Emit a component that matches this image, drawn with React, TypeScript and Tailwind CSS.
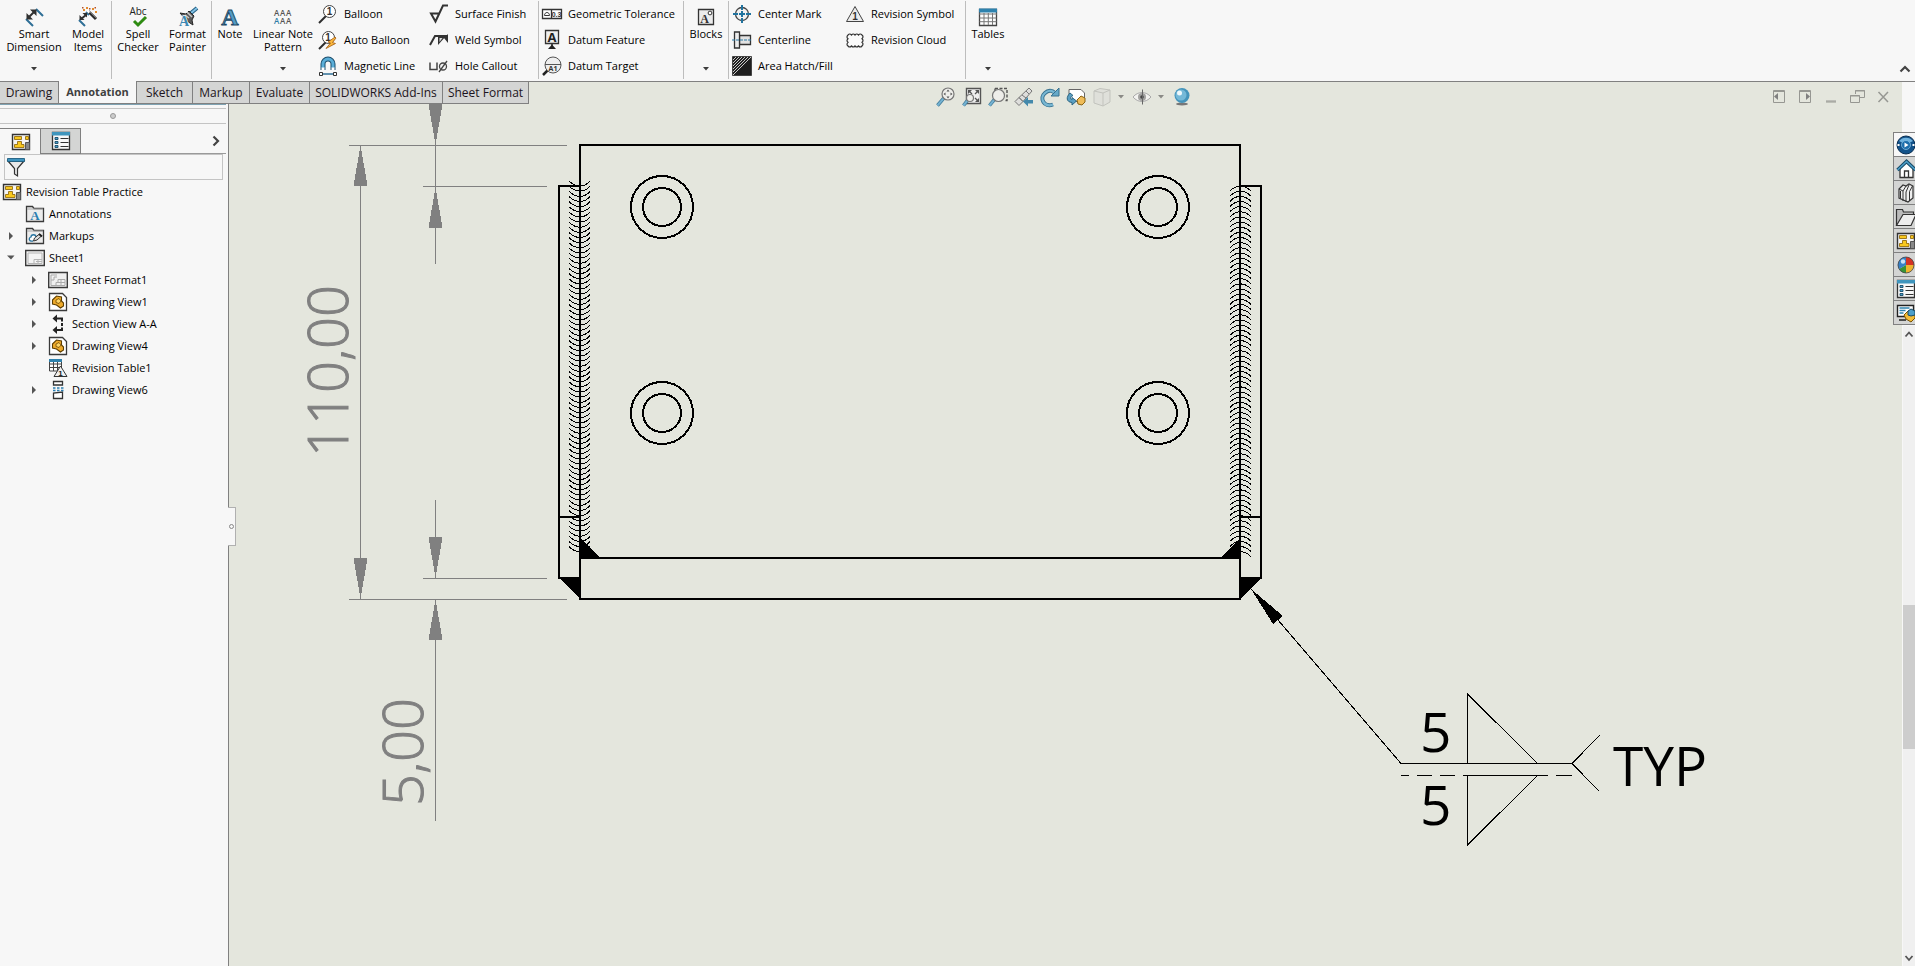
import React from "react";

type IconProps = { children: React.ReactNode; className?: string };

function Icon({ children, className = "h-5 w-5" }: IconProps) {
  return (
    <svg viewBox="0 0 20 20" fill="none" aria-hidden="true" className={`${className} shrink-0 overflow-visible`}>
      {children}
    </svg>
  );
}

function Caret({ className = "text-[#3c3c3c]" }: { className?: string }) {
  return (
    <svg viewBox="0 0 6 4" aria-hidden="true" className={`h-1 w-1.5 ${className}`}>
      <path d="M0 0h6L3 3.500z" fill="currentColor" />
    </svg>
  );
}

/* ---------- ribbon icons ---------- */

const SmartDimensionIcon = () => (
  <Icon>
    <path d="M2 12l7 7M12 2l7 7" stroke="#2f6f96" strokeWidth="2" />
    <path d="M4 11L11 4" stroke="#303030" strokeWidth="2" />
    <path d="M2.500 12.500V6l6.500 6.500zM12.500 2.500H6l6.500 6.500z" fill="#303030" />
  </Icon>
);

const ModelItemsIcon = () => (
  <Icon>
    <path d="M1 13l6 6M8 5l3 3" stroke="#2f6f96" strokeWidth="2" />
    <path d="M3 12L8 8" stroke="#303030" strokeWidth="2" />
    <path d="M1.500 13V8l5 5zM9 6H4.500L9 10.500z" fill="#303030" />
    <path d="M10 4l8 8" stroke="#2b2b2b" strokeWidth="3" />
    <path d="M9.500 3.500l2 2" stroke="#fff" strokeWidth="2.500" />
    <path d="M11.500 4.500l6.500 6.500" stroke="#8d8d8d" strokeWidth=".8" />
    <path d="M8 0h2v2H8zM14 1h2v2h-2zM17 4h2v2h-2zM5 2h2v2H5z" fill="#e48b2c" />
    <path d="M11 1h1.500v1.500H11zM4 0h1.500v1.500H4zM16.500 0H18v1.500h-1.500z" fill="#b4512a" />
  </Icon>
);

const SpellCheckerIcon = () => (
  <Icon>
    <text x="10" y="8" fontSize="10" textAnchor="middle" fontFamily="Open Sans, sans-serif" fill="#222">
      Abc
    </text>
    <path d="M6 14l4 4 8-8" stroke="#2e8b12" strokeWidth="3" />
  </Icon>
);

const FormatPainterIcon = () => (
  <Icon>
    <path d="M13 6l6-5" stroke="#235d80" strokeWidth="4" />
    <path d="M13 6l6-5" stroke="#7fc0e4" strokeWidth="2" />
    <path d="M2 6l6 1 3-3 5 5-2 4 1 5-6-4z" fill="#5a5a5a" stroke="#262626" />
    <path d="M9 5l5 5M7 8l4 3" stroke="#c9c9c9" strokeWidth="1.500" />
    <text x="1" y="19" fontSize="14" fontWeight="700" fontFamily="Liberation Serif, serif" fill="#3c88b4" stroke="#f7f7f7" strokeWidth="1.500" paintOrder="stroke">
      A
    </text>
  </Icon>
);

const NoteIcon = () => (
  <Icon>
    <text x="10" y="18" fontSize="24" fontWeight="700" textAnchor="middle" fontFamily="Liberation Serif, serif" fill="#529cc6" stroke="#1d4864" strokeWidth=".9">
      A
    </text>
  </Icon>
);

const LinearNoteIcon = () => (
  <Icon>
    <g fontSize="8" fontFamily="Open Sans, sans-serif" fontWeight="600" fill="#555">
      <text x="1" y="9">A</text>
      <text x="7" y="9">A</text>
      <text x="13" y="9">A</text>
      <text x="1" y="17" fill="#2d7da8">A</text>
      <text x="7" y="17">A</text>
      <text x="13" y="17">A</text>
    </g>
  </Icon>
);

const BalloonIcon = () => (
  <Icon>
    <path d="M1 19l7-7" stroke="#2d2d2d" strokeWidth="2" />
    <circle cx="11.500" cy="7.500" r="6" fill="#fff" stroke="#444" />
    <text x="11.500" y="11" fontSize="10" fontWeight="700" textAnchor="middle" fontFamily="Liberation Sans, sans-serif" fill="#333">
      1
    </text>
  </Icon>
);

const AutoBalloonIcon = () => (
  <Icon>
    <path d="M1 19l7-7" stroke="#2d2d2d" strokeWidth="2" />
    <circle cx="10.500" cy="7.500" r="6" fill="#fff" stroke="#444" />
    <text x="10" y="11" fontSize="10" fontWeight="700" textAnchor="middle" fontFamily="Liberation Sans, sans-serif" fill="#333">
      1
    </text>
    <path d="M17 7l-7 5 2.500 1L8 18.500l9.500-5-3-1L18 8z" fill="#fbb83c" stroke="#a25a11" strokeWidth=".8" />
  </Icon>
);

const MagneticLineIcon = () => (
  <Icon>
    <path d="M5 14V8a5 5 0 0 1 10 0v6" stroke="#1d4e6c" strokeWidth="5" />
    <path d="M5 12V8a5 5 0 0 1 10 0v4" stroke="#5aaed8" strokeWidth="3" />
    <path d="M3.500 11.500h3v2.500h-3zM13.500 11.500h3v2.500h-3z" fill="#fff" />
    <path d="M4 18h12" stroke="#2f6f96" strokeWidth="1.500" />
    <path d="M1.500 16.500h3v3h-3zM15.500 16.500h3v3h-3z" fill="#fff" stroke="#333" />
  </Icon>
);

const SurfaceFinishIcon = () => (
  <Icon>
    <path d="M19 1.500h-5L6.500 17.500 2 9.500h8" stroke="#333" strokeWidth="2" />
  </Icon>
);

const WeldSymbolIcon = () => (
  <Icon>
    <path d="M1 15L6 6h13" stroke="#333" strokeWidth="2" />
    <path d="M9 6v9l8-9M15 8l4 5V4z" fill="#333" />
    <path d="M10.500 8v4l3-4z" fill="#ddd" />
  </Icon>
);

const HoleCalloutIcon = () => (
  <Icon>
    <path d="M1 6.500v7h7v-7" stroke="#444" strokeWidth="1.500" />
    <circle cx="14" cy="10.500" r="3.500" stroke="#444" strokeWidth="1.300" />
    <path d="M10 16l8-11" stroke="#444" strokeWidth="1.300" />
  </Icon>
);

const GeometricToleranceIcon = () => (
  <Icon>
    <path d="M.5 5.500h19v9H.5zM9.500 5.500v9" fill="#fff" stroke="#333" strokeWidth="1.300" />
    <path d="M2.500 11.500h5c0-4-5-4-5 0z" stroke="#333" />
    <text x="14.500" y="12.500" fontSize="7" fontWeight="700" textAnchor="middle" fontFamily="Liberation Sans, sans-serif" fill="#333">
      0.3
    </text>
  </Icon>
);

const DatumFeatureIcon = () => (
  <Icon>
    <path d="M3.500.5h13v13h-13z" fill="#efefef" stroke="#333" strokeWidth="1.300" />
    <text x="10" y="11.500" fontSize="13" fontWeight="700" textAnchor="middle" fontFamily="Open Sans, sans-serif" fill="#222">
      A
    </text>
    <path d="M10 14v2" stroke="#222" strokeWidth="1.500" />
    <path d="M10 14.500l4 4.500H6z" fill="#222" />
  </Icon>
);

const DatumTargetIcon = () => (
  <Icon>
    <path d="M1 19l5-5" stroke="#222" strokeWidth="2.500" />
    <circle cx="11" cy="9" r="8" fill="#eee" stroke="#555" />
    <path d="M3 8.500h16" stroke="#555" />
    <text x="11" y="15" fontSize="7" fontWeight="700" textAnchor="middle" fontFamily="Open Sans, sans-serif" fill="#333">
      A1
    </text>
  </Icon>
);

const BlocksIcon = () => (
  <Icon>
    <path d="M2.500 2.500h15v15h-15z" fill="#ececec" stroke="#333" strokeWidth="1.300" />
    <text x="8.500" y="15.500" fontSize="12" fontWeight="700" textAnchor="middle" fontFamily="Liberation Serif, serif" fill="#333">
      A
    </text>
    <circle cx="14" cy="6" r="1.900" fill="#fff" stroke="#333" />
  </Icon>
);

const CenterMarkIcon = () => (
  <Icon>
    <circle cx="10" cy="10" r="6.500" fill="#f2f2f2" stroke="#444" strokeWidth="1.300" />
    <path d="M10 1v5M10 14v5M1 10h5M14 10h5M10 7v6M7 10h6" stroke="#20739f" strokeWidth="2" />
  </Icon>
);

const CenterlineIcon = () => (
  <Icon>
    <path d="M7.500 5.500h11v9h-11z" fill="#e2e2e2" stroke="#333" strokeWidth="1.300" />
    <path d="M2.500 2h5v16h-5z" fill="#ededed" stroke="#333" strokeWidth="1.300" />
    <path d="M0 10h20" stroke="#2b7ba5" strokeWidth="1.200" strokeDasharray="3 1" />
  </Icon>
);

const AreaHatchIcon = () => (
  <Icon>
    <path d="M.5.500h19v19H.5z" fill="#1f1f1f" stroke="#444" />
    <path d="M1 4l3-3M1 7l6-6M1 10l9-9M1 13l12-12M1 16L16 1M1 19L19 1" stroke="#ddd" strokeWidth=".9" />
  </Icon>
);

const RevisionSymbolIcon = () => (
  <Icon>
    <path d="M10 2.500l8.500 15h-17z" fill="#ececec" stroke="#444" />
    <text x="10" y="16" fontSize="10" fontWeight="700" textAnchor="middle" fontFamily="Liberation Sans, sans-serif" fill="#333">
      1
    </text>
  </Icon>
);

const RevisionCloudIcon = () => (
  <Icon>
    <path
      d="M3 5q1.700-2 3.500 0q1.700-2 3.500 0q1.700-2 3.500 0q1.700-2 3.500 0q2 1.700 0 3.700q2 1.700 0 3.600q2 1.700 0 3.700q-1.700 2-3.500 0q-1.700 2-3.500 0q-1.700 2-3.500 0q-1.700 2-3.500 0q-2-1.700 0-3.700q-2-1.700 0-3.600q-2-1.700 0-3.700z"
      fill="#fafafa"
      stroke="#333"
      strokeWidth="1.200"
    />
  </Icon>
);

const TablesIcon = () => (
  <Icon>
    <path d="M1.500 2.500h17v16h-17z" fill="#fff" stroke="#444" strokeWidth="1.300" />
    <path d="M1 7h18M1.500 11h17M1.500 14.700h17M6 6v12M10.300 6v12M14.500 6v12" stroke="#777" />
    <path d="M1 1.500h18v4H1z" fill="#2e82ae" />
  </Icon>
);

/* ---------- feature tree icons ---------- */

const DrawingIcon = () => (
  <Icon>
    <path d="M1.500 2.500h17v15h-17z" fill="#f4f4f4" stroke="#333" strokeWidth="1.400" />
    <path d="M3.500 4.500h7v3h-7zM14.500 4.500h3v3h-3zM6.500 9.500h4v3h2.500v3H3.500v-3h3z" fill="#f8c81e" stroke="#8a6100" strokeWidth=".8" />
    <path d="M14.500 17.500v-7h4v7z" fill="#888" stroke="#555" />
  </Icon>
);

const FolderShape = () => (
  <path d="M1.500 17.500v-15h6l1.500 2h9.500v13z" fill="#ececec" stroke="#3a3a3a" strokeWidth="1.300" />
);

const AnnotationsIcon = () => (
  <Icon>
    <FolderShape />
    <path d="M2 5h16" stroke="#aaa" />
    <text x="10" y="16" fontSize="13" fontWeight="700" textAnchor="middle" fontFamily="Liberation Serif, serif" fill="#2a7db0">
      A
    </text>
  </Icon>
);

const MarkupsIcon = () => (
  <Icon>
    <FolderShape />
    <path d="M2 5h16" stroke="#aaa" />
    <path d="M8 15c-4 1-5-3-2-4 0-3 5-3 5 0" fill="#fff" stroke="#2874a0" strokeWidth="1.300" />
    <path d="M8.500 15l1-3 5-4 2 2-4.500 4z" fill="#ddd" stroke="#333" />
    <path d="M14 8l3 2.500" stroke="#222" strokeWidth="2" />
  </Icon>
);

const SheetIcon = () => (
  <Icon>
    <path d="M.7 2.500h18.600v15H.7z" fill="#f4f4f4" stroke="#3a3a3a" strokeWidth="1.400" />
    <path d="M3 5h14v10.500H3zM9 15.500v-4h8M13 11.500v4M11 13.500h6" stroke="#b4b4b4" />
  </Icon>
);

const SheetFormatIcon = () => (
  <Icon>
    <path d="M.7 2.500h18.600v15H.7z" fill="#f0f0f0" stroke="#3a3a3a" strokeWidth="1.400" />
    <path d="M3 5h6M3 5v5h3v-3h3M8 15.500v-3h2v-3h7v6zM13 10v5.500M10 12.500h7M3 10v5.500h5" stroke="#aaa" />
  </Icon>
);

const DrawingViewIcon = () => (
  <Icon>
    <path d="M1.500 1.500h13l4 4v13h-17z" fill="#fff" stroke="#3a3a3a" strokeWidth="1.300" />
    <path d="M4.500 8l4-4 5 1v4l2 2v3l-3 2-4-3-4-1z" fill="#efab2b" stroke="#5f3f00" strokeWidth="1.100" />
    <path d="M8 8l3-1.500 2 2.500-2 2.500-3-1z" fill="#ffd566" stroke="#714a00" strokeWidth=".8" />
  </Icon>
);

const SectionViewIcon = () => (
  <Icon>
    <path d="M8 4.500h6v3M14 9v3M14 13.500v2.500H8" stroke="#222" strokeWidth="2" />
    <path d="M9 .5v8L4.500 4.500zM9 12v8l-4.500-4z" fill="#222" />
  </Icon>
);

const RevisionTableIcon = () => (
  <Icon>
    <path d="M1.500 2h12v11h-12zM1.500 6h12M1.500 9.500h12M5.500 4v9M9.500 4v9" fill="#fff" stroke="#444" />
    <path d="M1 1h13v3H1z" fill="#2e82ae" />
    <path d="M12.500 8l6.500 10.500H6z" fill="#f1f1f1" stroke="#333" />
    <text x="12.500" y="17.500" fontSize="8" fontWeight="700" textAnchor="middle" fontFamily="Liberation Sans, sans-serif" fill="#222">
      1
    </text>
  </Icon>
);

const BrokenViewIcon = () => (
  <Icon>
    <path d="M5.500 5V1.500h9V5zM5.500 18.500V13l9-1v6.500z" fill="#fff" stroke="#333" strokeWidth="1.300" />
    <path d="M5 8h2.500M9 8h2.500M13 8h2.500M5 10.500h2.500M9 10.500h2.500M13 10.500h2.500" stroke="#2a7db0" strokeWidth="1.500" />
  </Icon>
);

const PropertiesIcon = () => (
  <Icon>
    <path d="M1.500 1.500h17v17h-17z" fill="#f8f8f8" stroke="#333" strokeWidth="1.300" />
    <path d="M1 1h18v3.500H1z" fill="#3f95bd" />
    <path d="M4 6.500h3v2H4zM4 10.500h3v2H4zM4 14.500h3v2H4z" fill="#4da2cc" stroke="#174a66" strokeWidth=".9" />
    <path d="M9.500 7.500h8M9.500 11.500h8M9.500 15.500h8" stroke="#333" strokeWidth="1.200" />
  </Icon>
);

const FunnelIcon = () => (
  <Icon>
    <path d="M2 4l6.500 7.500V17l3 2v-7.500L18 4z" fill="#e9e9e9" stroke="#333" strokeWidth="1.200" />
    <path d="M1.500 1.500h17v3h-17z" fill="#3d93be" stroke="#1e5d7f" strokeWidth=".9" />
  </Icon>
);

/* ---------- view toolbar icons ---------- */

const Lens = ({ x, y, r }: { x: number; y: number; r: number }) => (
  <>
    <path d={`M1.500 18.500L${x - r * 0.7} ${y + r * 0.7}`} stroke="#3f7896" strokeWidth="3.500" />
    <path d={`M1.500 18.500L${x - r * 0.7} ${y + r * 0.7}`} stroke="#74b2d2" strokeWidth="2" />
    <circle cx={x} cy={y} r={r} fill="#eeeeea" stroke="#777" strokeWidth="1.200" />
  </>
);

const viewTools = [
  {
    label: "Zoom to Fit",
    icon: (
      <Icon>
        <Lens x={12} y={7} r={6} />
        <path d="M12 2.500L10.500 4.500h3zM12 11.500l-1.500-2h3zM7.500 7l2-1.500v3zM16.500 7l-2-1.500v3z" fill="#555" />
      </Icon>
    ),
  },
  {
    label: "Zoom to Area",
    icon: (
      <Icon>
        <path d="M4.500 1.500h14v15h-14z" fill="#eee" stroke="#555" strokeWidth="1.400" />
        <path d="M6 3h4L6 7zM17 3h-4l4 4zM17 15v-4l-4 4z" fill="#555" />
        <path d="M7 4l3 3M16 4l-3 3M16 14l-3-3" stroke="#555" strokeWidth="1.300" />
        <Lens x={8} y={11} r={3.5} />
      </Icon>
    ),
  },
  {
    label: "Zoom Selection",
    icon: (
      <Icon>
        <path d="M7 1.500h12v12h-3M7 1.500v3" stroke="#555" strokeWidth="1.400" strokeDasharray="3 1.500" />
        <Lens x={10.5} y={8.5} r={6} />
      </Icon>
    ),
  },
  {
    label: "Previous View",
    icon: (
      <Icon>
        <path d="M1 14.500l4 4 4-4-4-4zM5 10.500l4 4 9-10.500-3-3z" fill="#dededc" stroke="#777" />
        <path d="M8 8l4 3M12 4l3 3" stroke="#777" />
        <path d="M9 14.500l5-4.500v3h5v3.500h-5v3z" fill="#4489ab" />
      </Icon>
    ),
  },
  {
    label: "Rotate View",
    icon: (
      <Icon>
        <path d="M13 17.500C4 21-1 11 5 6c4-4 9-2 10.500 1" stroke="#36708e" strokeWidth="4" />
        <path d="M13 17.500C4 21-1 11 5 6c4-4 9-2 10.500 1" stroke="#78b7d3" strokeWidth="2.200" />
        <path d="M19 1v8h-8l3-3z" fill="#66a9c8" stroke="#36708e" />
      </Icon>
    ),
  },
  {
    label: "3D Drawing View",
    icon: (
      <Icon>
        <path d="M3 14V2.500h12l3.500 3.500v9z" fill="#fff" stroke="#666" />
        <path d="M4 6c-4 4-4 9 2 9.500V18l4.500-4L6 10.500v2c-2 0-2-3 1-4z" fill="#5a9fc2" stroke="#2d6683" />
        <path d="M11 13l4-4 4 2v4l-3 3-4-1z" fill="#efbc58" stroke="#8a6414" />
      </Icon>
    ),
  },
  {
    label: "Display Style",
    caret: true,
    icon: (
      <Icon>
        <path d="M2 4l6-2.500L18 3v12l-7 4-9-3z" fill="#dfe0da" stroke="#c2c3bd" />
        <path d="M2 4l9 2 7-3M11 6v13" stroke="#c2c3bd" />
      </Icon>
    ),
  },
  {
    label: "Hide/Show Items",
    caret: true,
    icon: (
      <Icon>
        <path d="M1 10c5-6 13-6 18 0-5 6-13 6-18 0z" fill="#f2f2ef" stroke="#aaa" />
        <circle cx="10" cy="10" r="4" fill="#a2a2a0" />
        <circle cx="10" cy="10" r="1.800" fill="#444" />
        <path d="M10.500 2.500v15" stroke="#666" />
      </Icon>
    ),
  },
  {
    label: "View Settings",
    icon: (
      <Icon>
        <ellipse cx="10" cy="17" rx="6" ry="1.500" fill="#777" />
        <circle cx="10" cy="8.500" r="7.500" fill="#4494bb" />
        <circle cx="9" cy="8" r="5.500" fill="#75b9d8" />
        <circle cx="7.500" cy="6" r="2.500" fill="#eef8fc" />
      </Icon>
    ),
  },
];

/* ---------- ribbon ---------- */

type LargeProps = { icon: React.ReactNode; lines: string[]; width: string; menu?: boolean };

function LargeButton({ icon, lines, width, menu }: LargeProps) {
  return (
    <button type="button" className={`${width} flex h-[78px] flex-col items-center pt-1.5`}>
      {icon}
      <span className="block leading-[13px]">
        {lines.map((line) => (
          <span key={line} className="block whitespace-nowrap">
            {line}
          </span>
        ))}
      </span>
      {menu && <Caret className="mt-auto mb-2 text-[#3c3c3c]" />}
    </button>
  );
}

function SmallColumn({ items, width }: { items: [string, React.ReactNode][]; width: string }) {
  return (
    <div className={`${width} flex flex-col`}>
      {items.map(([label, icon]) => (
        <button key={label} type="button" className="flex h-[26px] items-center gap-1.5 whitespace-nowrap">
          {icon}
          {label}
        </button>
      ))}
    </div>
  );
}

function Group({ children }: { children: React.ReactNode }) {
  return <div className="flex shrink-0 border-r border-[#bdbdbd]">{children}</div>;
}

function Ribbon() {
  return (
    <header className="flex h-[82px] border-b border-[#808080] bg-[#f7f7f7] pt-px pb-0.5 text-[11px]">
      <Group>
        <LargeButton width="w-[68px]" icon={<SmartDimensionIcon />} lines={["Smart", "Dimension"]} menu />
        <LargeButton width="mr-[3px] w-10" icon={<ModelItemsIcon />} lines={["Model", "Items"]} />
      </Group>
      <Group>
        <LargeButton width="w-[52px]" icon={<SpellCheckerIcon />} lines={["Spell", "Checker"]} />
        <LargeButton width="w-[47px]" icon={<FormatPainterIcon />} lines={["Format", "Painter"]} />
      </Group>
      <Group>
        <LargeButton width="w-9" icon={<NoteIcon />} lines={["Note"]} />
        <LargeButton width="w-[70px]" icon={<LinearNoteIcon />} lines={["Linear Note", "Pattern"]} menu />
        <SmallColumn
          width="w-[111px]"
          items={[
            ["Balloon", <BalloonIcon />],
            ["Auto Balloon", <AutoBalloonIcon />],
            ["Magnetic Line", <MagneticLineIcon />],
          ]}
        />
        <SmallColumn
          width="w-[109px]"
          items={[
            ["Surface Finish", <SurfaceFinishIcon />],
            ["Weld Symbol", <WeldSymbolIcon />],
            ["Hole Callout", <HoleCalloutIcon />],
          ]}
        />
      </Group>
      <Group>
        <SmallColumn
          width="ml-[3px] w-[141px]"
          items={[
            ["Geometric Tolerance", <GeometricToleranceIcon />],
            ["Datum Feature", <DatumFeatureIcon />],
            ["Datum Target", <DatumTargetIcon />],
          ]}
        />
      </Group>
      <Group>
        <LargeButton width="w-11" icon={<BlocksIcon />} lines={["Blocks"]} menu />
      </Group>
      <Group>
        <SmallColumn
          width="ml-[3px] w-[113px]"
          items={[
            ["Center Mark", <CenterMarkIcon />],
            ["Centerline", <CenterlineIcon />],
            ["Area Hatch/Fill", <AreaHatchIcon />],
          ]}
        />
        <SmallColumn
          width="w-[120px]"
          items={[
            ["Revision Symbol", <RevisionSymbolIcon />],
            ["Revision Cloud", <RevisionCloudIcon />],
          ]}
        />
      </Group>
      <LargeButton width="w-11" icon={<TablesIcon />} lines={["Tables"]} menu />
      <button type="button" aria-label="Collapse ribbon" className="mt-auto mr-1 mb-1.5 ml-auto">
        <svg viewBox="0 0 12 8" className="h-2 w-3" aria-hidden="true">
          <path d="M1.500 6.500L6 2l4.500 4.500" fill="none" stroke="#444" strokeWidth="2.200" />
        </svg>
      </button>
    </header>
  );
}

const tabs = [
  { label: "Drawing", width: "w-[59px]" },
  { label: "Annotation", width: "w-[78px]", active: true },
  { label: "Sketch", width: "w-14" },
  { label: "Markup", width: "w-[57px]" },
  { label: "Evaluate", width: "w-[60px]" },
  { label: "SOLIDWORKS Add-Ins", width: "w-[133px]" },
  { label: "Sheet Format", width: "w-[86px]" },
];

function CommandTabs() {
  return (
    <nav className="absolute -top-px left-0 z-20 flex">
      {tabs.map(({ label, width, active }) => (
        <button
          key={label}
          type="button"
          className={`${width} h-[23px] border-r border-b border-[#808080] text-center whitespace-nowrap ${
            active ? "bg-[#f7f7f7] text-[11px] font-bold text-[#404040]" : "border-t bg-[#d4d5d4] text-[#1c1420]"
          }`}
        >
          {label}
        </button>
      ))}
    </nav>
  );
}

/* ---------- feature manager ---------- */

type Node = { label: string; icon: React.ReactNode; level: number; state?: "open" | "closed" };

const tree: Node[] = [
  { label: "Revision Table Practice", icon: <DrawingIcon />, level: 0 },
  { label: "Annotations", icon: <AnnotationsIcon />, level: 1 },
  { label: "Markups", icon: <MarkupsIcon />, level: 1, state: "closed" },
  { label: "Sheet1", icon: <SheetIcon />, level: 1, state: "open" },
  { label: "Sheet Format1", icon: <SheetFormatIcon />, level: 2, state: "closed" },
  { label: "Drawing View1", icon: <DrawingViewIcon />, level: 2, state: "closed" },
  { label: "Section View A-A", icon: <SectionViewIcon />, level: 2, state: "closed" },
  { label: "Drawing View4", icon: <DrawingViewIcon />, level: 2, state: "closed" },
  { label: "Revision Table1", icon: <RevisionTableIcon />, level: 2 },
  { label: "Drawing View6", icon: <BrokenViewIcon />, level: 2, state: "closed" },
];

function FeatureManager() {
  return (
    <aside className="relative z-10 flex w-[229px] shrink-0 flex-col border-r border-[#808080] bg-[#f7f7f7] pt-[22px]">
      <div className="mr-0.5 h-5 border-t border-[#7fa3b3] pt-[3px]">
        <div className="flex h-4 items-center justify-center border-y border-[#c4c4c4]">
          <span className="h-1.5 w-1.5 rounded-full border border-[#999] bg-[#ccc]" />
        </div>
      </div>
      <div className="mr-0.5 flex h-[30px] items-end pt-1">
        <button type="button" aria-label="Feature tree" className="flex h-[26px] w-10 items-center justify-center border-t border-[#808080] pl-0.5">
          <DrawingIcon />
        </button>
        <button
          type="button"
          aria-label="Property manager"
          className="flex h-[26px] w-[41px] items-center justify-center border border-[#808080] bg-[#d4d5d4]"
        >
          <PropertiesIcon />
        </button>
        <div className="flex h-[26px] flex-1 items-center justify-end border-b border-[#9a9a9a] pr-1.5">
          <button type="button" aria-label="More tabs">
            <svg viewBox="0 0 8 12" className="h-3 w-2" aria-hidden="true">
              <path d="M1.500 1.500L6 6l-4.500 4.500" fill="none" stroke="#444" strokeWidth="2.200" />
            </svg>
          </button>
        </div>
      </div>
      <label className="mr-[5px] ml-1 flex h-[26px] items-center border border-[#c4c4c4] pl-px">
        <FunnelIcon />
        <input type="text" aria-label="Filter" className="min-w-0 flex-1 bg-transparent outline-none" />
      </label>
      <ul className="pt-px text-[11px]">
        {tree.map(({ label, icon, level, state }) => (
          <li key={label} className={`flex h-[22px] items-center ${level === 2 ? "pl-[23px]" : ""}`}>
            {level === 0 ? (
              <span className="w-0.5" />
            ) : (
              <span className="flex w-[25px] pl-[7px]">
                {state && (
                  <svg viewBox="0 0 8 8" className="h-2 w-2" aria-hidden="true">
                    <path d={state === "open" ? "M0 1.500h7.500L4 5.500z" : "M2 0l4 4-4 4z"} fill="#555" />
                  </svg>
                )}
              </span>
            )}
            {icon}
            <span className="ml-1 whitespace-nowrap">{label}</span>
          </li>
        ))}
      </ul>
      <div className="absolute top-[425px] -right-2 flex h-[39px] w-2 items-center justify-center border border-l-0 border-[#b0b0b0] bg-[#f7f7f7]">
        <span className="h-[5px] w-[5px] rounded-full border border-[#888]" />
      </div>
    </aside>
  );
}

/* ---------- drawing ---------- */

const BEAD_COUNT = 72;
const BEAD_PITCH = 5.15;
const beads = Array.from({ length: BEAD_COUNT }, (_, i) => i * BEAD_PITCH);

const holes = [
  [662, 207],
  [1158, 207],
  [662, 413],
  [1158, 413],
];

function Sheet() {
  return (
    <svg
      viewBox="229 82 1673 884"
      preserveAspectRatio="xMinYMin meet"
      shapeRendering="crispEdges"
      fill="none"
      className="absolute inset-0 h-full w-full"
      role="img"
      aria-label="Drawing sheet"
    >
      {/* dimensions */}
      <g stroke="#808080">
        <path d="M349 145.500H567M423 186.500H547M423 578.500H547M349 599.500H567" />
        <path d="M360.500 145V599M435.500 82V264M435.500 500V578M435.500 599V821" />
      </g>
      <g fill="#808080">
        <path d="M360.500 145l7 41h-14zM360.500 599l7-41h-14z" />
        <path d="M435.500 145l7-41h-14zM435.500 187l7 41h-14z" />
        <path d="M435.500 578l7-41h-14zM435.500 599l7 41h-14z" />
      </g>
      <g fill="#808080" stroke="#808080" fontFamily="Open Sans, sans-serif" fontSize="56" fontWeight="300">
        <text transform="translate(348 457) rotate(-90)">110,00</text>
        <text transform="translate(423 806) rotate(-90)">5,00</text>
      </g>

      {/* weld beads */}
      <g stroke="#000">
        {beads.map((dy) => (
          <path key={dy} d={`M569 ${181 + dy}q5 5 11 5q6 0 10-5`} />
        ))}
        {beads.map((dy) => (
          <path key={dy} d={`M1230 ${191 + dy}q5-5 10-5q6 0 11 5`} />
        ))}
      </g>
      <path d="M581 548h12v10h-12zM1227 548h12v10h-12z" fill="#e4e6dd" />

      {/* plate */}
      <g stroke="#000" strokeWidth="2">
        <path d="M580 145H1240V599H580zM580 558H1240" />
        <path d="M580 186H559V578H580M559 517H580M1240 186H1261V578H1240M1240 517H1261" />
        {holes.map(([x, y]) => (
          <React.Fragment key={`${x}-${y}`}>
            <circle cx={x} cy={y} r="31" />
            <circle cx={x} cy={y} r="19" />
          </React.Fragment>
        ))}
      </g>
      <path d="M580 538l20 20h-20zM1240 538l-20 20h20zM559 578h21v21zM1261 578h-21v21z" fill="#000" />

      {/* weld symbol */}
      <path d="M1251 589l22 35 10-8z" fill="#000" />
      <g stroke="#000">
        <path d="M1278 620L1401 763.500H1572L1600 735M1572 763.500L1599 791" />
        <path d="M1467.500 763V694L1537 763M1467.500 776V845L1537 776" />
        <path d="M1401 775.500h8M1417 775.500h15M1440 775.500h15M1463 775.500h85M1556 775.500h16" />
      </g>
      <g fill="#000" fontFamily="Open Sans, sans-serif" fontSize="55">
        <text x="1420" y="752">
          5
        </text>
        <text x="1420" y="825">
          5
        </text>
        <text x="1613" y="786">
          TYP
        </text>
      </g>
    </svg>
  );
}

function WindowControls() {
  const controls: [string, string][] = [
    ["Previous pane", "M1.500 1.500h11v12h-11zM1 2.500h12"],
    ["Next pane", "M1.500 1.500h11v12h-11zM1 2.500h12"],
    ["Minimize", "M2 12h10M2 13h10"],
    ["Restore", "M5.500 5V1.500h9v7H10M.5 6.500h9v7h-9zM5 2h10M0 7h10"],
    ["Close", "M2.500 3l9.500 10M12 3L2.500 13"],
  ];
  return (
    <div className="absolute top-[7px] right-[11px] flex gap-[11px]">
      {controls.map(([label, d], i) => (
        <button key={label} type="button" aria-label={label}>
          <svg viewBox="0 0 15 15" className="h-[15px] w-[15px]" fill="none" stroke="#969792" aria-hidden="true">
            <path d={d} strokeWidth={i === 4 ? 1.5 : 1} />
            {i === 0 && <path d="M6 4v7L2 7.500z" fill="#808080" stroke="none" />}
            {i === 1 && <path d="M8 4v7l4-3.500z" fill="#808080" stroke="none" />}
          </svg>
        </button>
      ))}
    </div>
  );
}

const taskPanes = [
  {
    label: "3DEXPERIENCE",
    icon: (
      <Icon>
        <circle cx="10" cy="10" r="9" fill="#12528a" stroke="#072c50" />
        <path d="M3 6a9 9 0 0 1 14 0l-4 2a4 4 0 0 0-6 0z" fill="#6fb3df" />
        <circle cx="10" cy="10" r="4.500" fill="#1c6dab" stroke="#8ec6e8" strokeWidth=".7" />
        <path d="M8.500 7.500l4 2.500-4 2.500zM1.500 9h2v2h-2zM16.500 9h2v2h-2z" fill="#fff" />
      </Icon>
    ),
  },
  {
    label: "Resources",
    icon: (
      <Icon>
        <path d="M4 9v9.500h13V9l-6.500-6z" fill="#fff" stroke="#333" strokeWidth="1.300" />
        <path d="M8.500 18v-6h4v6" stroke="#333" strokeWidth="1.300" />
        <path d="M1.500 11l9-8.500 9 8.500" stroke="#174b68" strokeWidth="3.500" />
        <path d="M1.500 11l9-8.500 9 8.500" stroke="#4ea1cb" strokeWidth="1.500" />
      </Icon>
    ),
  },
  {
    label: "Design Library",
    icon: (
      <Icon>
        <path d="M3 6l4-4 3 1 3-2 4 2v12l-5 4-9-4z" fill="#eee" stroke="#333" strokeWidth="1.200" />
        <path d="M3 6l4 2v10M7 8l3-5M10 9v10M10 9l3-7M13.500 8.500v9.500M13.500 8.500l3-5.500M4.500 8v7" stroke="#333" />
      </Icon>
    ),
  },
  {
    label: "File Explorer",
    icon: (
      <Icon>
        <path d="M.5 18V2.500h6l1 2.500h10v3" fill="#bbb" stroke="#333" strokeWidth="1.200" />
        <path d="M.5 18.500L7 7.500h13l-5 11z" fill="#eee" stroke="#333" strokeWidth="1.200" />
      </Icon>
    ),
  },
  { label: "View Palette", icon: <DrawingIcon /> },
  {
    label: "Appearances",
    icon: (
      <Icon>
        <path d="M10 10V2a8 8 0 0 1 8 8z" fill="#d43325" />
        <path d="M10 10h8a8 8 0 0 1-8 8z" fill="#efb52f" />
        <path d="M10 10v8a8 8 0 0 1-7-4z" fill="#389436" />
        <path d="M10 10l-7 4a8 8 0 0 1 7-12z" fill="#3781c6" />
        <circle cx="7" cy="6.500" r="2.200" fill="#c8e2f6" />
        <circle cx="10" cy="10" r="8" stroke="#444" strokeWidth=".8" />
      </Icon>
    ),
  },
  { label: "Custom Properties", icon: <PropertiesIcon /> },
  {
    label: "Forum",
    icon: (
      <Icon>
        <path d="M1.500 2.500h16v11h-16z" fill="#fff" stroke="#222" strokeWidth="1.400" />
        <path d="M3.500 5h10M3.500 7.500h6M3.500 10h4" stroke="#2e82ae" strokeWidth="1.400" />
        <path d="M3 17h7" stroke="#222" strokeWidth="1.500" />
        <path d="M8 12l4-4h7v7l-4 4-5-3z" fill="#f3bc36" stroke="#7b5200" />
        <path d="M12 8l3-2 4 2v4l-4 1-3-1z" fill="#4c9fca" stroke="#174b68" />
      </Icon>
    ),
  },
];

function TaskPane() {
  return (
    <div className="absolute top-[50px] right-0 z-10 w-[22px] overflow-hidden border-t border-l border-[#808080]">
      {taskPanes.map(({ label, icon }, i) => (
        <button
          key={label}
          type="button"
          aria-label={label}
          className={`flex h-6 w-full items-center border-b border-[#808080] pl-0.5 ${i === 0 ? "bg-[#f7f7f7]" : "bg-[#d4d5d4]"}`}
        >
          {icon}
        </button>
      ))}
    </div>
  );
}

function ScrollColumn() {
  return (
    <div className="flex w-[13px] shrink-0 flex-col bg-[#f7f7f7] pt-[244px]">
      <div className="ml-px flex flex-1 flex-col items-center bg-[#f0f0f0]">
        <svg viewBox="0 0 10 8" className="mt-1 h-2 w-2.5" aria-hidden="true">
          <path d="M1.500 6.500L5 2.500l3.500 4" fill="none" stroke="#555" strokeWidth="1.800" />
        </svg>
        <div className="flex w-full flex-1 flex-col">
          <div className="grow-[267]" />
          <div className="grow-[144] bg-[#cdcdcd]" />
          <div className="grow-[205]" />
        </div>
        <svg viewBox="0 0 10 8" className="mb-1 h-2 w-2.5" aria-hidden="true">
          <path d="M1.500 2L5 6l3.500-4" fill="none" stroke="#555" strokeWidth="1.800" />
        </svg>
      </div>
    </div>
  );
}

function App() {
  return (
    <div className="flex h-screen flex-col overflow-hidden bg-[#f7f7f7] font-['Open_Sans',sans-serif] text-[12px] leading-4 text-black">
      <Ribbon />
      <main className="relative flex min-h-0 flex-1">
        <CommandTabs />
        <FeatureManager />
        <section className="relative min-w-0 flex-1 bg-[#e4e6dd]">
          <Sheet />
          <div className="absolute inset-x-0 top-[5px] flex justify-center pr-1">
            {viewTools.map(({ label, icon, caret }) => (
              <button key={label} type="button" aria-label={label} className="flex h-5 items-center px-[3px]">
                {icon}
                {caret && <Caret className="mr-0.5 ml-1.5 text-[#8a8a86]" />}
              </button>
            ))}
          </div>
          <WindowControls />
        </section>
        <ScrollColumn />
        <TaskPane />
      </main>
    </div>
  );
}

export default App;
